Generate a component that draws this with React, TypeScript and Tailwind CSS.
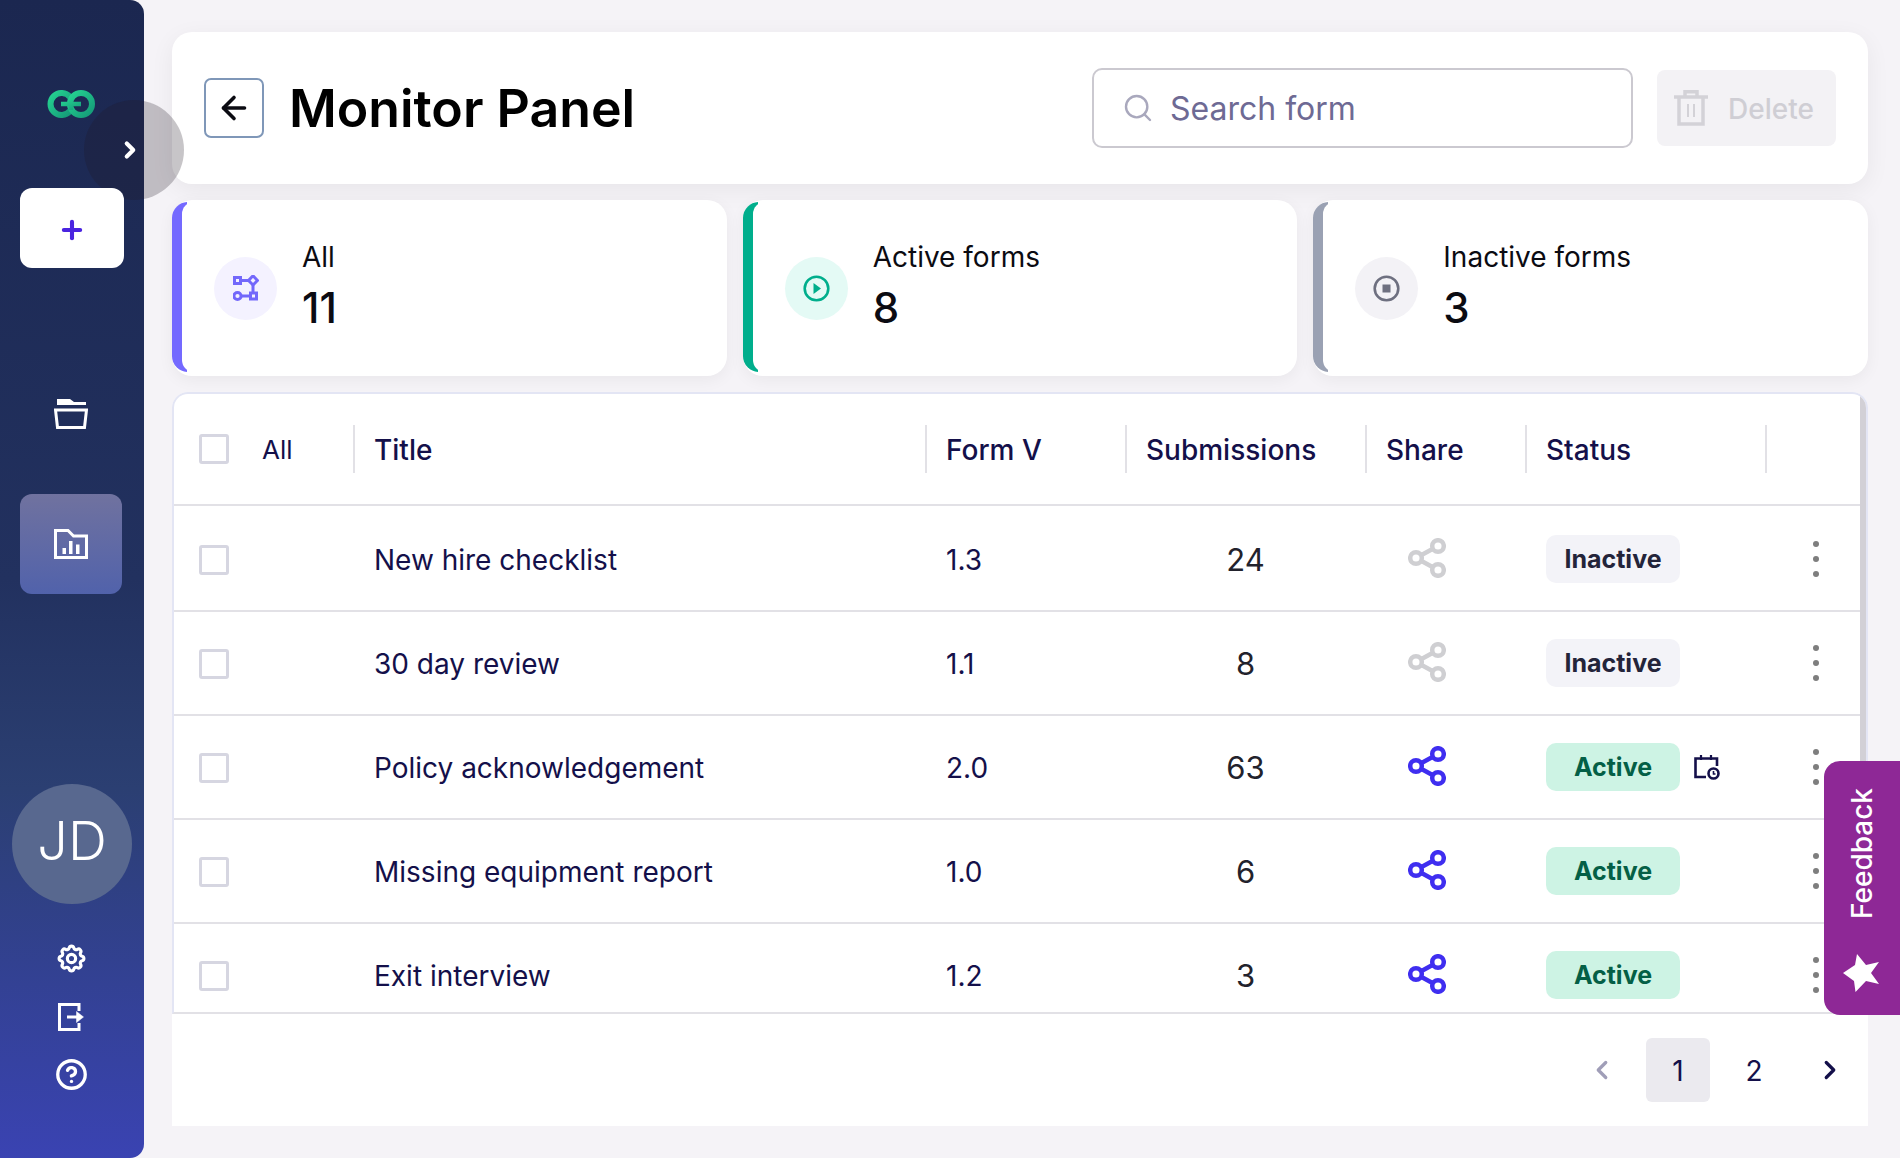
import { ArrowLeft, ChevronLeft, ChevronRight, CircleHelp, Plus, Search } from 'lucide-react';
import { TbSettings } from 'react-icons/tb';

const forms = [
  { title: 'New hire checklist', version: '1.3', submissions: 24, active: false },
  { title: '30 day review', version: '1.1', submissions: 8, active: false },
  { title: 'Policy acknowledgement', version: '2.0', submissions: 63, active: true, scheduled: true },
  { title: 'Missing equipment report', version: '1.0', submissions: 6, active: true },
  { title: 'Exit interview', version: '1.2', submissions: 3, active: true },
];

const gridCols = 'grid grid-cols-[179px_572px_200px_240px_160px_240px_1fr] items-center';

function Logo() {
  return (
    <svg width="48" height="28" viewBox="0 0 48 28" fill="none">
      <defs>
        <linearGradient id="logo" x1="0" x2="1" y1="0" y2="1">
          <stop offset="0" stopColor="#25d391" />
          <stop offset="1" stopColor="#159a78" />
        </linearGradient>
      </defs>
      <path d="M23 7 A11 11 0 1 0 23 21" stroke="url(#logo)" strokeWidth="6" />
      <circle cx="34" cy="14" r="11" stroke="url(#logo)" strokeWidth="6" />
      <path d="M14 14 H34 M24 10 V20" stroke="url(#logo)" strokeWidth="4.5" />
    </svg>
  );
}

function FolderOpen() {
  return (
    <svg width="34" height="30" viewBox="0 0 34 30" fill="none">
      <path d="M3 0 H16 L20 3 H32 V6 H3 Z" fill="#fff" />
      <path d="M1.5 11 H32.5 L30.5 28.5 H3.5 Z" stroke="#fff" strokeWidth="3" />
    </svg>
  );
}

function FolderChart() {
  return (
    <svg width="34" height="30" viewBox="0 0 34 30" fill="none">
      <path d="M1.5 1.5 H14 L19.5 7 H32.5 V28.5 H1.5 Z" stroke="#fff" strokeWidth="3" />
      <path d="M8.5 19 H12 V25 H8.5 Z M15 12 H18.5 V25 H15 Z M22 15.5 H25.5 V25 H22 Z" fill="#fff" />
    </svg>
  );
}

function Logout() {
  return (
    <svg width="26" height="28" viewBox="0 0 26 28" fill="none" stroke="#fff" strokeWidth="3">
      <path d="M21 8 V1.5 H1.5 V26.5 H21 V20" />
      <path d="M9 14 H20" />
      <path d="M18.5 8.5 L25.5 14 L18.5 19.5 Z" fill="#fff" strokeWidth="0.5" />
    </svg>
  );
}

function Workflow() {
  return (
    <svg width="26" height="27" viewBox="0 0 26 27" fill="none" stroke="#7368fb" strokeWidth="3">
      <rect x="1.5" y="2.5" width="6" height="6" />
      <path d="M20 0.8 L24.5 5.5 L20 10 L15.5 5.5 Z" />
      <circle cx="4.5" cy="21" r="3.6" />
      <rect x="17.5" y="18" width="6" height="6" />
      <path d="M8 5.5 H15.5 M20 10 V18 M8 21 H17.2" />
    </svg>
  );
}

function PlayCircle() {
  return (
    <svg width="27" height="27" viewBox="0 0 27 27" fill="none">
      <circle cx="13.5" cy="13.5" r="11.8" stroke="#00ae8c" strokeWidth="2.6" />
      <path d="M10.5 8 L18 13.5 L10.5 19 Z" fill="#00ae8c" />
    </svg>
  );
}

function StopCircle() {
  return (
    <svg width="27" height="27" viewBox="0 0 27 27" fill="none">
      <circle cx="13.5" cy="13.5" r="11.8" stroke="#6e7080" strokeWidth="2.6" />
      <rect x="9.5" y="9.5" width="8" height="8" fill="#6e7080" />
    </svg>
  );
}

function Trash() {
  return (
    <svg width="34" height="36" viewBox="0 0 34 36" fill="none" stroke="#d3d2d7" strokeWidth="3.5">
      <path d="M0 7 H34" />
      <path d="M11 7 V1.8 H23 V7" />
      <path d="M5 7 V34 H29 V7" />
      <path d="M14 14 V27 M20 14 V27" strokeWidth="2" />
    </svg>
  );
}

function ShareIcon({ active }: { active: boolean }) {
  return (
    <svg width="38" height="40" viewBox="0 0 38 40" fill="none" stroke={active ? '#3f2ef0' : '#cfcfd2'} strokeWidth="4.5">
      <circle cx="30" cy="8" r="5.8" />
      <circle cx="30" cy="32" r="5.8" />
      <circle cx="8" cy="20" r="5.8" />
      <path d="M13.5 17 L24.5 11 M13.5 23 L24.5 29" />
    </svg>
  );
}

function CalendarClock() {
  return (
    <svg width="26" height="26" viewBox="0 0 26 26" fill="none" stroke="#14104a" strokeWidth="2.6">
      <path d="M12 23 H1.5 V4.5 H23 V12" />
      <path d="M7 1 V6 M17 1 V6" strokeWidth="2.2" />
      <circle cx="19.5" cy="19.5" r="5" strokeWidth="2.6" />
      <path d="M19.5 17 V20 H21.5" strokeWidth="1.6" />
    </svg>
  );
}

function Checkbox() {
  return <div className="w-[30px] h-[30px] rounded-[3px] border-[3px] border-[#d6d6e1] bg-white" />;
}

function StatCard({ label, value, bar, circle, icon }: { label: string; value: number; bar: string; circle: string; icon: React.ReactNode }) {
  return (
    <div className="relative flex-1 h-[176px] bg-white rounded-[20px] shadow-[0_4px_16px_rgba(0,0,0,0.05)] flex items-center pl-[42px] gap-[25px]">
      <div className="absolute left-0 top-[2px] bottom-[4px] w-[15px] overflow-hidden">
        <div className={`w-[40px] h-full rounded-l-[16px] ${bar}`}>
          <div className="ml-[10px] h-full rounded-l-[12px] bg-white" />
        </div>
      </div>
      <div className={`w-[63px] h-[63px] rounded-full flex items-center justify-center ${circle}`}>{icon}</div>
      <div className="text-[#0b0b12] pb-[4px]">
        <div className="text-[28px] leading-[36px]">{label}</div>
        <div className="text-[42px] leading-[50px] mt-[8px] font-medium">{value}</div>
      </div>
    </div>
  );
}

export default function App() {
  return (
    <div className="relative h-screen overflow-hidden flex bg-[#f5f3f7] font-['Inter',sans-serif]">
      {/* sidebar */}
      <aside className="w-[144px] h-full shrink-0 rounded-r-[14px] flex flex-col items-center bg-[linear-gradient(180deg,#1b2750_0%,#22315f_50%,#2b3f72_68%,#3a43b2_100%)]">
        <div className="mt-[90px] h-[28px] mr-[2px]">
          <Logo />
        </div>
        <button className="relative z-20 mt-[70px] w-[104px] h-[80px] pt-[4px] bg-white rounded-[12px] flex items-center justify-center">
          <Plus size={28} strokeWidth={3.5} className="text-[#4a24e0]" />
        </button>
        <div className="mt-[131px] h-[30px] mr-[2px]">
          <FolderOpen />
        </div>
        <div className="mt-[65px] mr-[2px] w-[102px] h-[100px] rounded-[12px] flex items-center justify-center bg-[linear-gradient(180deg,#70729f,#5162ab)]">
          <FolderChart />
        </div>
        <div className="mt-[190px] w-[120px] h-[120px] pb-[8px] rounded-full bg-[#58688f] flex items-center justify-center text-white text-[54px] font-light">
          JD
        </div>
        <TbSettings size={33} strokeWidth={2.3} className="text-white mt-[38px] mr-[2px]" />
        <div className="mt-[28px] h-[28px] mr-[2px]">
          <Logout />
        </div>
        <CircleHelp size={33} strokeWidth={2.4} className="text-white mt-[27px] mr-[2px]" />
      </aside>

      {/* main */}
      <main className="flex-1 flex flex-col pt-[32px] pl-[28px] pr-[32px]">
        <header className="h-[152px] bg-white rounded-[20px] shadow-[0_6px_24px_rgba(0,0,0,0.06)] flex items-center pl-[32px] pr-[32px]">
          <button className="w-[60px] h-[60px] rounded-[7px] border-2 border-[#7f97b8] flex items-center justify-center text-[#0b0b12]">
            <ArrowLeft size={36} strokeWidth={2.4} />
          </button>
          <h1 className="ml-[25px] pt-[1px] text-[51.8px] leading-none font-semibold text-black">Monitor Panel</h1>
          <div className="ml-auto w-[541px] h-[80px] rounded-[10px] border-2 border-[#cbc9d0] flex items-center pl-[28px]">
            <Search size={32} strokeWidth={1.8} className="text-[#a9a8bd]" />
            <span className="ml-[16px] pt-[2px] text-[32px] text-[#6e6a94]">Search form</span>
          </div>
          <button className="ml-[24px] w-[179px] h-[76px] rounded-[8px] bg-[#f3f2f5] flex items-center pl-[17px] gap-[20px]">
            <Trash />
            <span className="pt-[1px] text-[28px] font-medium text-[#cfced4]">Delete</span>
          </button>
        </header>

        <section className="mt-[16px] flex gap-[16px]">
          <StatCard label="All" value={11} bar="bg-[#7469ff]" circle="bg-[#f4f2ff]" icon={<Workflow />} />
          <StatCard label="Active forms" value={8} bar="bg-[#00ae8c]" circle="bg-[#e4faf5]" icon={<PlayCircle />} />
          <StatCard label="Inactive forms" value={3} bar="bg-[#9aa1b3]" circle="bg-[#f3f2f6]" icon={<StopCircle />} />
        </section>

        <section className="mt-[16px] h-[734px] bg-white rounded-t-[16px] flex flex-col">
          <div className="relative h-[622px] shrink-0 overflow-hidden rounded-t-[16px] border-2 border-[#e3e5f4] border-b-[#e2e1e6] text-[#14104a]">
            <div className={`${gridCols} h-[112px] border-b-2 border-[#e2e1e6] text-[28px] font-medium`}>
              <div className="flex items-center pl-[25px]">
                <Checkbox />
                <span className="ml-[33px] text-[26px] font-normal">All</span>
              </div>
              {['Title', 'Form V', 'Submissions', 'Share', 'Status'].map((h) => (
                <div key={h} className="h-[48px] flex items-center border-l-2 border-[#e2e1e6] pl-[19px] pt-[2px]">
                  {h}
                </div>
              ))}
              <div className="h-[48px] border-l-2 border-[#e2e1e6]" />
            </div>
            {forms.map((f, i) => (
              <div key={f.title} className={`${gridCols} ${i === 0 ? 'h-[106px] pt-[2px]' : 'h-[104px]'} border-b-2 border-[#e2e1e6] text-[28px]`}>
                <div className="pl-[25px] pt-[2px]">
                  <Checkbox />
                </div>
                <div className="pl-[21px] pt-[2px]">{f.title}</div>
                <div className="pl-[21px] pt-[2px]">{f.version}</div>
                <div className="text-center pt-[2px] pl-[1px] text-[31px] text-[#22222c]">{f.submissions}</div>
                <div className="pl-[43px] pb-[2px]">
                  <ShareIcon active={f.active} />
                </div>
                <div className="pl-[21px] flex items-center">
                  <span
                    className={`w-[134px] h-[48px] pt-[2px] shrink-0 rounded-[10px] flex items-center justify-center text-[25px] font-bold ${
                      f.active ? 'bg-[#cdf3e4] text-[#045f46]' : 'bg-[#f3f3f8] text-[#23243a]'
                    }`}
                  >
                    {f.active ? 'Active' : 'Inactive'}
                  </span>
                  {f.scheduled && (
                    <span className="ml-[14px]">
                      <CalendarClock />
                    </span>
                  )}
                </div>
                <div className="pl-[48px] flex flex-col gap-[9px]">
                  <span className="w-[6px] h-[6px] rounded-full bg-[#7e7e7e]" />
                  <span className="w-[6px] h-[6px] rounded-full bg-[#7e7e7e]" />
                  <span className="w-[6px] h-[6px] rounded-full bg-[#7e7e7e]" />
                </div>
              </div>
            ))}
            <div className="absolute right-0 top-0 bottom-0 w-[6px] bg-[#d2d0d6]" />
          </div>

          <div className="flex-1 flex items-center justify-end gap-[12px] pr-[6px] text-[28px] text-[#14104a]">
            <button className="w-[64px] h-[64px] flex items-center justify-center text-[#a09eb8]">
              <ChevronLeft size={30} strokeWidth={2.6} />
            </button>
            <button className="w-[64px] h-[64px] pt-[2px] rounded-[6px] bg-[#ebeaef] flex items-center justify-center">1</button>
            <button className="w-[64px] h-[64px] pt-[2px] flex items-center justify-center">2</button>
            <button className="w-[64px] h-[64px] flex items-center justify-center">
              <ChevronRight size={30} strokeWidth={2.6} />
            </button>
          </div>
        </section>
      </main>

      {/* collapse handle */}
      <div className="absolute z-10 left-[84px] top-[100px] w-[100px] h-[100px] rounded-full bg-[rgba(30,25,35,0.25)] flex items-center justify-center pr-[8px]">
        <ChevronRight size={26} strokeWidth={3.8} className="text-white" />
      </div>

      {/* feedback tab */}
      <div className="absolute z-30 right-0 top-[761px] w-[76px] h-[254px] rounded-l-[16px] bg-[#8e2896] flex flex-col items-center pt-[27px] text-white">
        <span className="[writing-mode:vertical-rl] rotate-180 text-[28px] leading-none font-medium">Feedback</span>
        <svg width="38" height="38" viewBox="0 0 38 38" className="mt-[35px] mr-[2px]" fill="#fff">
          <path d="M1 19 L13 11 L15 0 L24 11 L37 8 L29 19 L37 30 L24 27 L13.5 38 L12 27 Z" />
        </svg>
      </div>
    </div>
  );
}
